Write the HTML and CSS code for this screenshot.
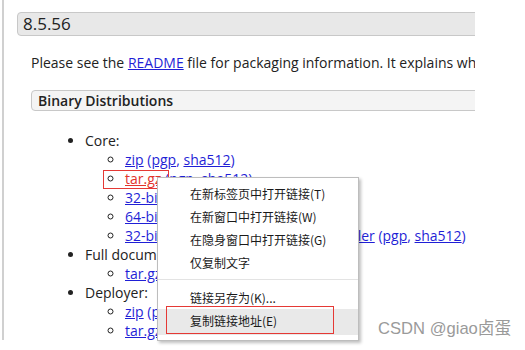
FILE: index.html
```html
<!DOCTYPE html>
<html lang="zh-CN">
<head>
<meta charset="utf-8">
<title>Tomcat 8.5.56</title>
<link rel="stylesheet" href="styles.css">
</head>
<body>
<div class="page">
  <div class="main">
    <h2 class="ver">8.5.56</h2>
    <p class="intro">Please see the <a href="#">README</a> file for packaging information. It explains what every distribution contains.</p>
    <h3 class="bin">Binary Distributions</h3>
    <ul class="dist">
      <li>Core:
        <ul>
          <li><a href="#">zip</a> <span class="par">(<a href="#">pgp</a>, <a href="#">sha512</a>)</span></li>
          <li><a href="#" class="hover">tar.gz</a> <span class="par">(<a href="#">pgp</a>, <a href="#">sha512</a>)</span></li>
          <li><a href="#">32-bit Windows zip</a> <span class="par">(<a href="#">pgp</a>, <a href="#">sha512</a>)</span></li>
          <li><a href="#">64-bit Windows zip</a> <span class="par">(<a href="#">pgp</a>, <a href="#">sha512</a>)</span></li>
          <li><a href="#">32-bit/64-bit Windows Service Installer</a> <span class="par">(<a href="#">pgp</a>, <a href="#">sha512</a>)</span></li>
        </ul>
      </li>
      <li>Full documentation:
        <ul>
          <li><a href="#">tar.gz</a> <span class="par">(<a href="#">pgp</a>, <a href="#">sha512</a>)</span></li>
        </ul>
      </li>
      <li>Deployer:
        <ul>
          <li><a href="#">zip</a> <span class="par">(<a href="#">pgp</a>, <a href="#">sha512</a>)</span></li>
          <li><a href="#">tar.gz</a> <span class="par">(<a href="#">pgp</a>, <a href="#">sha512</a>)</span></li>
        </ul>
      </li>
    </ul>
  </div>
</div>

<div class="mark-link"></div>

<div class="ctx">
  <div class="item">在新标签页中打开链接(T)</div>
  <div class="item">在新窗口中打开链接(W)</div>
  <div class="item">在隐身窗口中打开链接(G)</div>
  <div class="item">仅复制文字</div>
  <div class="sep"></div>
  <div class="item">链接另存为(K)...</div>
  <div class="item active">复制链接地址(E)</div>
  <div class="mark-item"></div>
</div>

<div class="watermark">CSDN @giao卤蛋</div>
</body>
</html>
```

FILE: styles.css
```css
html, body {
  margin: 0;
  padding: 0;
  background: #fff;
}
body {
  width: 525px;
  height: 350px;
  overflow: hidden;
  position: relative;
  font-family: "Open Sans", "Noto Sans", sans-serif;
  color: #222;
}
.page {
  margin-left: 2px;
  border-left: 2px solid #d0d0d0;
  height: 340px;
}
.main {
  width: 471px;
  overflow: hidden;
  padding-top: 12px;
  height: 328px;
}
.ver {
  margin: 0 -20px 0 13px;
  height: 22px;
  line-height: 22px;
  padding-left: 5px;
  font-size: 17px;
  font-weight: 400;
  background: #e8e8e8;
  border: 1px solid #c8c8c8;
  border-radius: 4px;
}
.intro {
  margin: 17px 0 0 27px;
  font-size: 14px;
  line-height: 19px;
  white-space: nowrap;
}
a {
  color: #1f1fd6;
  text-decoration: underline;
}
a.hover {
  color: #e2332b;
}
.bin {
  margin: 18px -20px 0 27px;
  height: 19px;
  line-height: 19px;
  padding-left: 6px;
  font-size: 14px;
  font-weight: 600;
  background: #f4f4f4;
  border: 1px solid #c8c8c8;
  border-radius: 4px;
}
.dist {
  margin: 20px 0 0 0;
  padding-left: 81px;
  font-size: 14px;
  line-height: 19px;
  white-space: nowrap;
}
.dist ul {
  margin: 0;
  padding-left: 40px;
  list-style: circle;
}
.par {
  color: #1f1fd6;
}
.mark-link {
  position: absolute;
  left: 103px;
  top: 170px;
  width: 64px;
  height: 17px;
  border: 1px solid #e53935;
}
.ctx {
  position: absolute;
  left: 157px;
  top: 177px;
  width: 202px;
  height: 164px;
  box-sizing: border-box;
  background: #fff;
  border: 1px solid #bdbdbd;
  box-shadow: 2px 2px 3px rgba(0,0,0,0.25);
  padding-top: 4px;
  font-family: "Noto Sans CJK SC", "Microsoft YaHei", sans-serif;
  font-size: 12px;
  color: #1a1a1a;
}
.item {
  height: 23px;
  line-height: 23px;
  padding-left: 32px;
  white-space: nowrap;
}
.item.active {
  background: #e9e9e9;
  height: 26px;
  line-height: 24px;
}
.sep {
  height: 1px;
  background: #e3e3e3;
  margin: 5px 0 6px;
}
.mark-item {
  position: absolute;
  left: 8px;
  top: 128px;
  width: 166px;
  height: 26px;
  border: 1px solid #e53935;
}
.watermark {
  position: absolute;
  left: 378px;
  top: 315px;
  font-family: "Liberation Sans", "Noto Sans CJK SC", sans-serif;
  font-size: 16.6px;
  color: #9a9a9a;
  white-space: nowrap;
}
```
